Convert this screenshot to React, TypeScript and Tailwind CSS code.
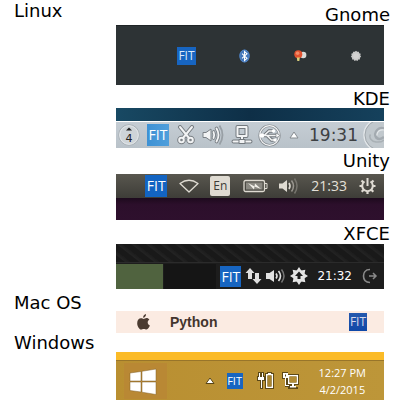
import type { ReactNode } from "react";

const heading = "font-['DejaVu_Sans',sans-serif] text-[18px] leading-[18px] font-normal text-black";

function Row({ title, titleClass, children }: { title: string; titleClass: string; children: ReactNode }) {
  return (
    <section className="grid grid-cols-[116px_minmax(0,1fr)]">
      <h2 className={`${heading} pl-[14px] whitespace-nowrap ${titleClass}`}>{title}</h2>
      <div>{children}</div>
    </section>
  );
}

function Desktop({ name, className, children }: { name: string; className: string; children: ReactNode }) {
  return (
    <article>
      <h3 className={`${heading} pr-[10px] text-right ${className}`}>{name}</h3>
      <div className="mr-4 overflow-hidden">{children}</div>
    </article>
  );
}

function Fit({ className }: { className: string }) {
  return (
    <button
      type="button"
      className={`flex shrink-0 items-center justify-center font-['Open_Sans',sans-serif] font-medium ${className}`}
    >
      FIT
    </button>
  );
}

function Tray({
  label,
  w,
  h,
  className = "",
  children,
}: {
  label: string;
  w: number;
  h: number;
  className?: string;
  children: ReactNode;
}) {
  return (
    <button type="button" aria-label={label} className={`shrink-0 ${className}`}>
      <svg width={w} height={h} viewBox={`0 0 ${w} ${h}`} fill="none" className="block">
        {children}
      </svg>
    </button>
  );
}

function Gear({ cx, cy, r, tooth, fill, teeth }: { cx: number; cy: number; r: number; tooth: number; fill: string; teeth: number }) {
  const points: string[] = [];
  for (let i = 0; i < teeth * 2; i++) {
    const radius = i % 2 === 0 ? r : r - tooth;
    const a = (Math.PI * i) / teeth - Math.PI / 2;
    points.push(`${(cx + radius * Math.cos(a)).toFixed(2)},${(cy + radius * Math.sin(a)).toFixed(2)}`);
  }
  return <polygon points={points.join(" ")} fill={fill} />;
}

function GnomePanel() {
  return (
    <div className="flex h-[60px] items-center border-t border-[#1f2426] bg-[#2d3335] pr-[22px]">
      <Fit className="ml-auto h-[18px] w-[19px] bg-[#1765c1] text-[12px] leading-[18px] text-[#dcebfa]" />
      <Tray label="Bluetooth" w={11} h={14} className="ml-[43px]">
        <ellipse cx="5.500" cy="7" rx="5.200" ry="6.500" fill="#3f74b8" />
        <ellipse cx="5.500" cy="7" rx="4.600" ry="5.900" stroke="#6496d2" strokeWidth=".6" />
        <path d="M3 4.700 8 9.300 5.500 11.500V2.500L8 4.700 3 9.300" stroke="#fff" strokeWidth="1.100" />
      </Tray>
      <Tray label="Input" w={13} h={14} className="ml-[44px]">
        <circle cx="9.200" cy="6" r="3.200" fill="#d9dbd8" />
        <circle cx="4.300" cy="5.200" r="4" fill="#e2522f" />
        <circle cx="3.600" cy="4.200" r="1.800" fill="#f28b68" />
        <path d="M2.800 8.500h3l-.5 3.500h-2z" fill="#d9cf7c" />
      </Tray>
      <Tray label="Settings" w={12} h={12} className="ml-[43px]">
        <Gear cx={6} cy={6} r={5.2} tooth={0.9} teeth={11} fill="#c9cac9" />
        <circle cx="6" cy="6" r="2.800" fill="#d3d3d2" />
      </Tray>
    </div>
  );
}

function KdePanel() {
  return (
    <>
      <div className="h-[13px] bg-linear-to-r from-[#184963] via-[#0e2f47] to-[#15415c]" />
      <div className="mt-px flex h-[26px] items-center bg-linear-to-b from-[#c5cdd4] to-[#b9c2c9]">
        <Tray label="Updates" w={22} h={22} className="ml-auto">
          <circle cx="11" cy="11" r="10.300" fill="#ced4d8" stroke="#a9b1b7" />
          <circle cx="11" cy="11" r="9.300" stroke="#e3e7ea" />
          <path d="m8 6.500 3-3 3 3z" fill="#222" />
          <text x="7.500" y="17.500" fontSize="11" fontFamily="DejaVu Sans" fill="#222">4</text>
        </Tray>
        <Fit className="ml-[7px] h-[22px] w-[22px] bg-linear-to-r from-[#3d91d4] to-[#4f9fdc] text-[14px] leading-[22px] text-white" />
        <Tray label="Clipboard" w={18} h={20} className="ml-2">
          <g stroke="#777d82" strokeWidth="4" strokeLinecap="round">
            <path d="M3 2 12 13M15 2 6 13" />
            <circle cx="4.500" cy="15" r="2.300" />
            <circle cx="13.500" cy="15" r="2.300" />
          </g>
          <g stroke="#f2f3f4" strokeWidth="2" strokeLinecap="round">
            <path d="M3 2 12 13M15 2 6 13" />
            <circle cx="4.500" cy="15" r="2.300" />
            <circle cx="13.500" cy="15" r="2.300" />
          </g>
        </Tray>
        <Tray label="Volume" w={23} h={24} className="ml-[7px]">
          <path d="M1 9.500h3L9 6v12l-5-3.500H1z" fill="#f2f3f4" stroke="#7b8186" strokeLinejoin="round" />
          <g stroke="#7b8186" strokeWidth="3.600" strokeLinecap="round">
            <path d="M11.500 9q1.500 3 0 6M14.500 5.500q4 6.500 0 13" />
          </g>
          <g stroke="#f2f3f4" strokeWidth="1.800" strokeLinecap="round">
            <path d="M11.500 9q1.500 3 0 6M14.500 5.500q4 6.500 0 13" />
          </g>
          <path d="M17.500 2.500q6 9.500 0 19" stroke="#989fa5" strokeWidth="1.800" />
        </Tray>
        <Tray label="Network" w={22} h={22} className="ml-[6px]">
          <g stroke="#73797e" strokeWidth="4" strokeLinejoin="round">
            <path d="M6.500 3h9v9h-9zM11 12v5M2.500 17.500h17" strokeLinecap="round" />
          </g>
          <g stroke="#f2f3f4" strokeWidth="2" strokeLinejoin="round">
            <path d="M6.500 3h9v9h-9zM11 12v5M2.500 17.500h17" strokeLinecap="round" />
          </g>
          <path d="M8 15.500h6v4H8z" fill="#f2f3f4" stroke="#73797e" />
        </Tray>
        <Tray label="Removable devices" w={23} h={23} className="ml-[5px]">
          <circle cx="11.500" cy="11.500" r="9.800" stroke="#868c91" strokeWidth="2.600" />
          <circle cx="11.500" cy="11.500" r="9.800" stroke="#f4f5f6" strokeWidth="1.200" />
          <g stroke="#70767b" strokeWidth="3.400">
            <path d="M3 11.500h16M6 11.500l5-4.500h4M9 11.500l4.500 4.500H17" />
          </g>
          <g stroke="#f2f3f4" strokeWidth="1.600">
            <path d="M3 11.500h16M6 11.500l5-4.500h4M9 11.500l4.500 4.500H17" />
          </g>
          <circle cx="4" cy="11.500" r="2.300" fill="#fff" />
          <path d="m18 9 4 2.500-4 2.500z" fill="#fff" stroke="#70767b" strokeWidth=".6" />
          <circle cx="15.500" cy="7" r="1.700" fill="#fff" />
          <path d="M15.500 14.500h3v3h-3z" fill="#fff" />
        </Tray>
        <Tray label="Show hidden icons" w={10} h={8} className="ml-2">
          <path d="m5 1 4 6H1z" fill="#fff" stroke="#858b90" strokeLinejoin="round" />
        </Tray>
        <time className="ml-[10px] font-['DejaVu_Sans',sans-serif] text-[17px] leading-6 text-[#3d4043]">19:31</time>
        <Tray label="Desktop toolbox" w={21} h={26} className="ml-[5px]">
          <circle cx="17" cy="13" r="16" fill="#c1c8cd" stroke="#e2e6e9" strokeWidth="1.500" />
          <circle cx="17" cy="13" r="15" stroke="#a2a9ae" />
          <path d="M21 6.500c-5-2-10 3-8.500 7.500s6 3 8.500 1" stroke="#a3aab0" strokeWidth="2.500" />
          <path d="M7.500 12.500c-2 3 1 7 5.500 7.500s7-1 8-2" stroke="#a9b0b5" strokeWidth="1.500" />
          <path d="M21 8c-4-1-7.500 2-7 5.500" stroke="#e4e8ea" strokeWidth="1.200" />
        </Tray>
      </div>
    </>
  );
}

function UnityPanel() {
  return (
    <>
      <div className="flex h-6 items-center bg-linear-to-b from-[#59574f] to-[#3e3d38] pr-2">
        <Fit className="ml-auto h-[22px] w-[22px] bg-[#1364c2] text-[14px] leading-[22px] text-white" />
        <Tray label="Wireless" w={20} h={16} className="ml-3">
          <path d="M1 5.500Q10-1 19 5.500L10 14z" stroke="#dfdbd2" strokeWidth="1.300" strokeLinejoin="round" />
        </Tray>
        <button
          type="button"
          className="ml-[11px] flex h-5 w-5 items-center justify-center rounded-xs bg-[#dfdbd2] font-['Open_Sans',sans-serif] text-[12px] leading-5 font-medium text-[#3c3b37]"
        >
          En
        </button>
        <Tray label="Battery" w={25} h={14} className="ml-[13px]">
          <rect x="1" y="1.500" width="20.500" height="11" rx="1.500" stroke="#dfdbd2" strokeWidth="1.300" />
          <rect x="3" y="3.500" width="16.500" height="7" fill="#8b8982" />
          <path d="M22 4.500h2v5h-2" stroke="#dfdbd2" />
          <path d="m5 4 6.500 3.500.5-3 6 5.500-6.500-2.500-.5 3z" fill="#f3f1ea" />
        </Tray>
        <Tray label="Volume" w={20} h={18} className="ml-[11px]">
          <path d="M0 6.500h3.500L8 3v12l-4.500-3.500H0z" fill="#dfdbd2" />
          <path d="M10 6q2 3 0 6" stroke="#dfdbd2" strokeWidth="1.600" />
          <path d="M12.500 3.500q4 5.500 0 11" stroke="#99968f" strokeWidth="1.500" />
          <path d="M15.500 1.500q5 7.500 0 15" stroke="#77756e" strokeWidth="1.500" />
        </Tray>
        <time className="ml-3 font-['Open_Sans',sans-serif] text-[14px] leading-6 font-medium text-[#e4e0d8]">21:33</time>
        <Tray label="Session" w={17} h={18} className="ml-3">
          <path d="M5.500 4.500a5.300 5.300 0 1 0 6 0" stroke="#dfdbd2" strokeWidth="2" />
          <path d="M8.500 1v8" stroke="#dfdbd2" strokeWidth="2" />
          <path
            d="M2.500 3.500 4.500 5.500M14.500 3.500l-2 2M.5 9h3M13.500 9h3M2.700 14.800l2-2M14.300 14.800l-2-2M8.500 14v3"
            stroke="#dfdbd2"
            strokeWidth="2.200"
          />
        </Tray>
      </div>
      <div className="h-[22px] bg-linear-to-b from-[#1d0a1d] via-[#2c0f2b] via-30% to-[#2e102d]" />
    </>
  );
}

function XfcePanel() {
  return (
    <>
      <div className="h-[18px] bg-[repeating-linear-gradient(38deg,#191919_0px,#191919_5px,#232323_6px,#1c1c1c_9px)]" />
      <div className="flex h-[27px] items-center border-t border-[#2b2b2b] bg-[#1d1d1d]">
        <div className="h-[25px] w-[47px] bg-[#50633f]" />
        <div className="mr-1 ml-px h-[25px] flex-1 bg-[#151515]" />
        <Fit className="h-[21px] w-[21px] bg-[#1765c1] text-[14px] leading-[21px] text-white" />
        <Tray label="Network" w={17} h={18} className="ml-1">
          <path d="M5 1 9.500 6H7v6H3V6H.5zM12 17 7.500 12H10V6h4v6h2.500z" fill="#dedede" />
        </Tray>
        <Tray label="Volume" w={20} h={16} className="ml-1">
          <path d="M0 5h3.500L8 2v12l-4.500-3H0z" fill="#e2e2e2" />
          <path d="M10 5.500q2 2.500 0 5M12.500 3q4 5 0 10" stroke="#e2e2e2" strokeWidth="1.600" />
          <path d="M15.500 1.500q5 6.500 0 13" stroke="#777" strokeWidth="1.500" />
        </Tray>
        <Tray label="Settings" w={18} h={18} className="ml-1">
          <Gear cx={9} cy={9} r={9} tooth={3} teeth={8} fill="#e4e4e4" />
          <circle cx="9" cy="9" r="6" fill="#e4e4e4" />
          <path d="m9 4.500 4 4.500h-2.500v3h-3V9H5z" fill="#1d1d1d" />
        </Tray>
        <time className="ml-[9px] font-['DejaVu_Sans',sans-serif] text-[12px] leading-6 text-white">21:32</time>
        <Tray label="Log out" w={16} h={16} className="mr-[6px] ml-[10px]">
          <path d="M8 1.500C3 1.500 1.500 5 1.500 8S3 14.500 8 14.500" stroke="#8a8a8a" strokeWidth="1.600" />
          <path d="M7 8h7M11 5l3 3-3 3" stroke="#8a8a8a" strokeWidth="1.500" />
        </Tray>
      </div>
    </>
  );
}

function MacBar() {
  return (
    <div className="mt-[22px] mr-4 flex h-[22px] items-center bg-[#fbebe2] pr-[17px] pl-[21px]">
      <Tray label="Apple menu" w={13} h={16}>
        <path
          d="M9 0c.2 1.900-1.200 3.700-2.900 3.800C5.900 2 7.500.3 9 0zM6.600 4.900c.8 0 1.600-.8 2.900-.8 1.200 0 2.200.6 2.900 1.500-2.500 1.500-2.100 4.800.5 5.900-.6 1.600-1.900 4-3.400 4-1 0-1.400-.6-2.700-.6s-1.700.6-2.700.6C2.300 15.500.2 12.200.2 9.200.2 6 2 4.200 4 4.200c1.200 0 1.900.7 2.600.7z"
          fill="#4b3b31"
        />
      </Tray>
      <button type="button" className="ml-5 font-['Liberation_Sans',sans-serif] text-[14px] leading-[22px] font-bold text-[#43352d]">
        Python
      </button>
      <Fit className="ml-auto h-[18px] w-[18px] bg-linear-to-b from-[#2458ad] to-[#0f48a8] text-[12px] leading-[18px] text-[#d6d9ea]" />
    </div>
  );
}

function WindowsBar() {
  return (
    <div className="mt-[19px] mr-4">
      <div className="h-2 bg-[#fbbb27]" />
      <div className="flex h-10 items-center border-t border-[#98752a] bg-linear-to-r from-[#b98f31] to-[#bd9639] pr-[18px] pl-2">
        <Tray label="Start" w={43} h={36} className="bg-[#b98834]">
          <path
            d="m6 10 11-1.500V18H6zM18 8.300 32 6v12H18zM6 19h11v10L6 27.500zM18 19h14v12.500l-14-2.300z"
            fill="#fff"
            stroke="#80602a"
            strokeWidth=".5"
          />
        </Tray>
        <Tray label="Show hidden icons" w={10} h={8} className="ml-auto">
          <path d="m5 1 4 5.500H1z" fill="#fff" stroke="#594515" />
        </Tray>
        <Fit className="ml-3 h-4 w-4 bg-[#1765c1] text-[11px] leading-4 text-white" />
        <Tray label="Power" w={17} h={17} className="ml-[14px]">
          <g fill="#5b4818">
            <path d="M1 0h6v4h1v5H6v8H3V9H0V4h1z" />
            <path d="M8 1h2V0h5v1h2v16H8z" />
          </g>
          <path d="M2 1h1v4h2V1h1v4h1v3H5v8H4V8H1V5h1z" fill="#fff" />
          <path fillRule="evenodd" d="M9 2h2V1h3v1h2v14H9zM10.500 3.500v11h4v-11z" fill="#fff" />
          <path d="M10.500 3.500h4v11h-4z" fill="#a8842e" />
        </Tray>
        <Tray label="Network" w={17} h={17} className="ml-2">
          <g fill="#5b4818">
            <path d="M5 2h12v11h-4v2h3v2H6v-2H3V7H0V0h6v2z" />
          </g>
          <path fillRule="evenodd" d="M6 3h10v9H6zM7.500 4.500v6h7v-6z" fill="#fff" />
          <path d="M7.500 4.500h7v6h-7z" fill="#b28c34" />
          <path fillRule="evenodd" d="M1 1h5v5H4v7h3v1H3V6H1zM3 2.500v2h1v-2z" fill="#fff" />
          <path d="M10 12h2v2h2v1.500H8V14h2z" fill="#fff" />
        </Tray>
        <time className="ml-5 text-center font-['Open_Sans',sans-serif] text-[11px] leading-[17px] font-medium whitespace-nowrap text-white">
          12:27 PM
          <br />
          4/2/2015
        </time>
      </div>
    </div>
  );
}

export default function App() {
  return (
    <main className="bg-white">
      <Row title="Linux" titleClass="pt-[2px]">
        <Desktop name="Gnome" className="pt-[6px] pb-px">
          <GnomePanel />
        </Desktop>
        <Desktop name="KDE" className="pt-[5px]">
          <KdePanel />
        </Desktop>
        <Desktop name="Unity" className="pt-1 pb-1">
          <UnityPanel />
        </Desktop>
        <Desktop name="XFCE" className="pt-[5px] pb-px">
          <XfcePanel />
        </Desktop>
      </Row>
      <Row title="Mac OS" titleClass="pt-[5px]">
        <MacBar />
      </Row>
      <Row title="Windows" titleClass="pt-px">
        <WindowsBar />
      </Row>
    </main>
  );
}
